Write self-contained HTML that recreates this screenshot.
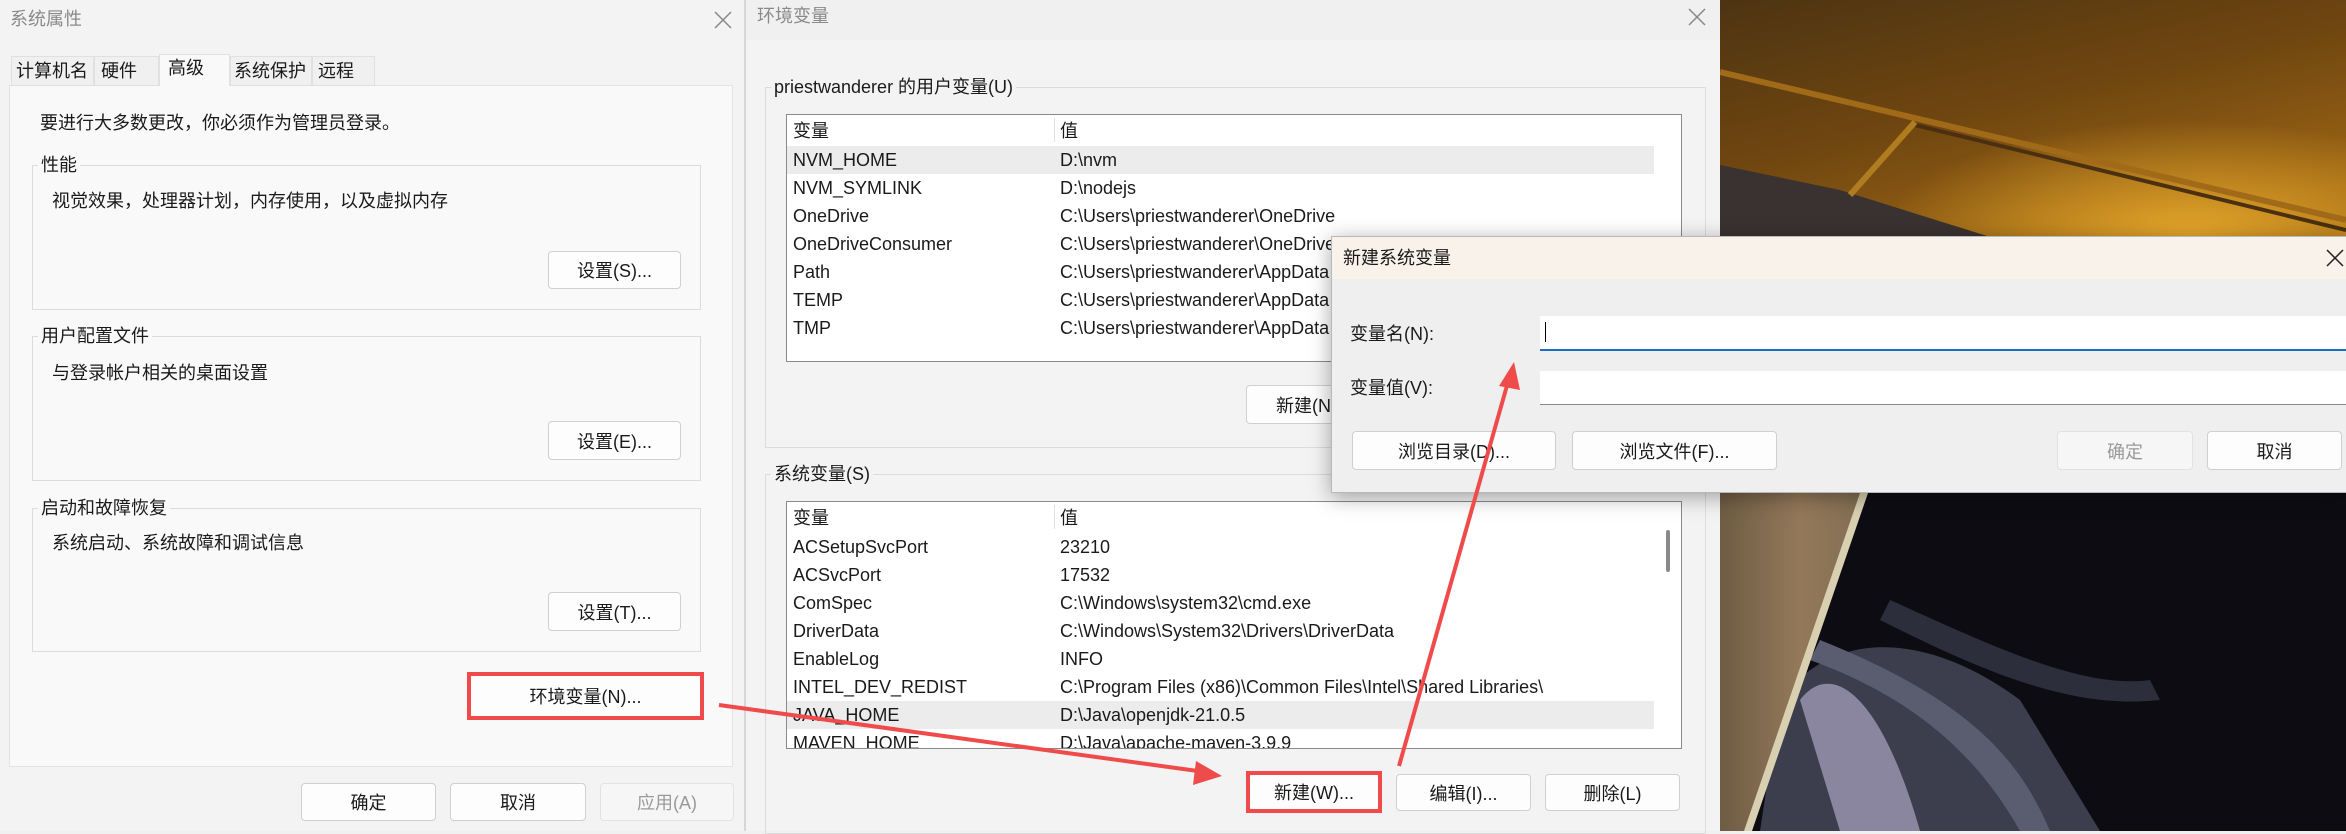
<!DOCTYPE html>
<html><head><meta charset="utf-8"><style>
*{box-sizing:border-box;margin:0;padding:0}
body{width:2346px;height:831px;overflow:hidden;position:relative;background:#f0f0f0;font-family:"Liberation Sans","Noto Sans CJK SC",sans-serif;font-size:18px;color:#1a1a1a}
.a{position:absolute}
.t{position:absolute;white-space:nowrap;line-height:1}
.btn{position:absolute;background:#fdfdfd;border:1px solid #d0d0d0;border-radius:4px;display:flex;align-items:center;justify-content:center;font-size:18px}
.dis{color:#9a9a9a;background:#f6f6f6;border-color:#e2e2e2}
.grp{position:absolute;border:1px solid #dcdcdc}
.lbl{position:absolute;background:#f9f9f9;padding:0 3px;line-height:1;white-space:nowrap}
.red{position:absolute;border:4px solid #ef4b4b}
</style></head><body>

<!-- left window -->
<div class="a" style="left:0;top:0;width:745px;height:831px;background:#f3f3f3"></div>
<div class="t" style="left:10px;top:10px;color:#8a8a8a">系统属性</div>
<svg class="a" style="left:714px;top:11px" width="18" height="18"><path d="M1 1L17 17M17 1L1 17" stroke="#888" stroke-width="1.5"/></svg>
<div class="a" style="left:9px;top:85px;width:724px;height:682px;background:#f9f9f9;border:1px solid #e3e3e3"></div>
<div class="a" style="left:11px;top:56px;width:83px;height:30px;background:#f0f0f0;border:1px solid #e0e0e0"></div>
<div class="a" style="left:94px;top:56px;width:65px;height:30px;background:#f0f0f0;border:1px solid #e0e0e0"></div>
<div class="a" style="left:159px;top:54px;width:71px;height:32px;background:#f9f9f9;border:1px solid #e0e0e0;border-bottom:none"></div>
<div class="a" style="left:230px;top:56px;width:82px;height:30px;background:#f0f0f0;border:1px solid #e0e0e0"></div>
<div class="a" style="left:312px;top:56px;width:63px;height:30px;background:#f0f0f0;border:1px solid #e0e0e0"></div>
<div class="t" style="left:16px;top:62px">计算机名</div>
<div class="t" style="left:101px;top:62px">硬件</div>
<div class="t" style="left:168px;top:59px">高级</div>
<div class="t" style="left:234px;top:62px">系统保护</div>
<div class="t" style="left:318px;top:62px">远程</div>
<div class="t" style="left:40px;top:114px">要进行大多数更改，你必须作为管理员登录。</div>

<div class="grp" style="left:32px;top:165px;width:669px;height:145px"></div>
<div class="lbl" style="left:38px;top:156px">性能</div>
<div class="t" style="left:52px;top:192px">视觉效果，处理器计划，内存使用，以及虚拟内存</div>
<div class="btn" style="left:548px;top:251px;width:133px;height:38px">设置(S)...</div>

<div class="grp" style="left:32px;top:336px;width:669px;height:145px"></div>
<div class="lbl" style="left:38px;top:327px">用户配置文件</div>
<div class="t" style="left:52px;top:364px">与登录帐户相关的桌面设置</div>
<div class="btn" style="left:548px;top:421px;width:133px;height:39px">设置(E)...</div>

<div class="grp" style="left:32px;top:508px;width:669px;height:144px"></div>
<div class="lbl" style="left:38px;top:499px">启动和故障恢复</div>
<div class="t" style="left:52px;top:534px">系统启动、系统故障和调试信息</div>
<div class="btn" style="left:548px;top:592px;width:133px;height:39px">设置(T)...</div>

<div class="btn" style="left:471px;top:676px;width:229px;height:40px;border:none;background:#fdfdfd">环境变量(N)...</div>
<div class="red" style="left:467px;top:672px;width:237px;height:48px"></div>

<div class="btn" style="left:301px;top:783px;width:135px;height:38px">确定</div>
<div class="btn" style="left:450px;top:783px;width:136px;height:38px">取消</div>
<div class="btn dis" style="left:600px;top:783px;width:134px;height:38px">应用(A)</div>

<!-- env window -->
<div class="a" style="left:744px;top:0;width:2px;height:831px;background:#d6d6d6"></div>
<div class="a" style="left:746px;top:0;width:974px;height:831px;background:#f0f0f0"></div>
<div class="a" style="left:746px;top:40px;width:974px;height:791px;background:#f3f3f3"></div>
<div class="t" style="left:757px;top:7px;color:#8a8a8a">环境变量</div>
<svg class="a" style="left:1688px;top:8px" width="18" height="18"><path d="M1 1L17 17M17 1L1 17" stroke="#888" stroke-width="1.5"/></svg>

<div class="grp" style="left:765px;top:87px;width:941px;height:361px"></div>
<div class="lbl" style="left:771px;top:78px;background:#f3f3f3">priestwanderer 的用户变量(U)</div>
<div class="a" style="left:786px;top:114px;width:896px;height:248px;background:#fff;border:1px solid #8a8a8a"></div>
<div class="a" style="left:787px;top:146px;width:867px;height:28px;background:#ececec"></div>
<div class="a" style="left:1054px;top:118px;width:1px;height:24px;background:#e0e0e0"></div>
<div class="t" style="left:793px;top:122px">变量</div><div class="t" style="left:1060px;top:122px">值</div>
<div class="t" style="left:793px;top:151px">NVM_HOME</div><div class="t" style="left:1060px;top:151px">D:\nvm</div>
<div class="t" style="left:793px;top:179px">NVM_SYMLINK</div><div class="t" style="left:1060px;top:179px">D:\nodejs</div>
<div class="t" style="left:793px;top:207px">OneDrive</div><div class="t" style="left:1060px;top:207px">C:\Users\priestwanderer\OneDrive</div>
<div class="t" style="left:793px;top:235px">OneDriveConsumer</div><div class="t" style="left:1060px;top:235px">C:\Users\priestwanderer\OneDrive</div>
<div class="t" style="left:793px;top:263px">Path</div><div class="t" style="left:1060px;top:263px">C:\Users\priestwanderer\AppData</div>
<div class="t" style="left:793px;top:291px">TEMP</div><div class="t" style="left:1060px;top:291px">C:\Users\priestwanderer\AppData</div>
<div class="t" style="left:793px;top:319px">TMP</div><div class="t" style="left:1060px;top:319px">C:\Users\priestwanderer\AppData</div>
<div class="btn" style="left:1246px;top:385px;width:136px;height:39px">新建(N)...</div>

<div class="grp" style="left:765px;top:474px;width:941px;height:360px"></div>
<div class="lbl" style="left:771px;top:465px;background:#f3f3f3">系统变量(S)</div>
<div class="a" style="left:786px;top:501px;width:896px;height:248px;background:#fff;border:1px solid #8a8a8a;overflow:hidden"></div>
<div class="a" style="left:787px;top:701px;width:867px;height:28px;background:#ececec"></div>
<div class="a" style="left:1666px;top:530px;width:4px;height:42px;background:#8a8a8a;border-radius:2px"></div>
<div class="a" style="left:1054px;top:505px;width:1px;height:24px;background:#e0e0e0"></div>
<div class="a" style="left:787px;top:502px;width:866px;height:246px;overflow:hidden">
<div class="t" style="left:6px;top:7px">变量</div><div class="t" style="left:273px;top:7px">值</div>
<div class="t" style="left:6px;top:36px">ACSetupSvcPort</div><div class="t" style="left:273px;top:36px">23210</div>
<div class="t" style="left:6px;top:64px">ACSvcPort</div><div class="t" style="left:273px;top:64px">17532</div>
<div class="t" style="left:6px;top:92px">ComSpec</div><div class="t" style="left:273px;top:92px">C:\Windows\system32\cmd.exe</div>
<div class="t" style="left:6px;top:120px">DriverData</div><div class="t" style="left:273px;top:120px">C:\Windows\System32\Drivers\DriverData</div>
<div class="t" style="left:6px;top:148px">EnableLog</div><div class="t" style="left:273px;top:148px">INFO</div>
<div class="t" style="left:6px;top:176px">INTEL_DEV_REDIST</div><div class="t" style="left:273px;top:176px">C:\Program Files (x86)\Common Files\Intel\Shared Libraries\</div>
<div class="t" style="left:6px;top:204px">JAVA_HOME</div><div class="t" style="left:273px;top:204px">D:\Java\openjdk-21.0.5</div>
<div class="t" style="left:6px;top:232px">MAVEN_HOME</div><div class="t" style="left:273px;top:232px">D:\Java\apache-maven-3.9.9</div>
</div>
<div class="btn" style="left:1250px;top:775px;width:128px;height:34px;border:none">新建(W)...</div>
<div class="red" style="left:1246px;top:771px;width:136px;height:42px"></div>
<div class="btn" style="left:1396px;top:774px;width:135px;height:37px">编辑(I)...</div>
<div class="btn" style="left:1545px;top:774px;width:135px;height:37px">删除(L)</div>

<!-- background photo -->
<svg class="a" style="left:1720px;top:0" width="626" height="831" viewBox="0 0 626 831">
<defs>
<linearGradient id="g1" x1="0" y1="0" x2="0.6" y2="1"><stop offset="0" stop-color="#4d3412"/><stop offset="0.5" stop-color="#6e4510"/><stop offset="1" stop-color="#9c6514"/></linearGradient>
<radialGradient id="g2" cx="0.75" cy="1" r="0.5"><stop offset="0" stop-color="#e6a82a"/><stop offset="1" stop-color="#e6a82a" stop-opacity="0"/></radialGradient>
<linearGradient id="g3" x1="0" y1="0" x2="1" y2="0"><stop offset="0" stop-color="#6e5c44"/><stop offset="0.5" stop-color="#94795a"/><stop offset="1" stop-color="#7d6a50"/></linearGradient>
<clipPath id="cp"><path d="M146 493 L626 493 L626 831 L30 831 Z"/></clipPath>
</defs>
<rect width="626" height="240" fill="url(#g1)"/>
<rect width="626" height="240" fill="url(#g2)"/>
<path d="M0 72 L626 220" stroke="#a06a18" stroke-width="6"/>
<path d="M195 125 L626 230" stroke="#4a3010" stroke-width="4"/>
<path d="M0 165 L0 240 L280 240 L120 190 Z" fill="#3a3230"/>
<path d="M130 195 L195 122" stroke="#b07c20" stroke-width="6"/>
<rect y="240" width="160" height="591" fill="url(#g3)"/>
<g clip-path="url(#cp)">
<rect y="240" width="626" height="591" fill="#0c0c12"/>
<path d="M60 700 C120 620 220 640 300 700 L380 831 L40 831 Z" fill="#3c3e4e"/>
<path d="M80 700 C110 660 160 690 200 831 L120 831 Z" fill="#8a86a0"/>
<path d="M100 640 C250 700 300 760 330 831 L300 831 C260 760 200 700 90 660Z" fill="#5a5c70"/>
<path d="M170 600 C260 640 360 690 430 680 L440 700 C350 710 260 670 160 620Z" fill="#2c2e3c"/>
</g>
<path d="M140 493 L148 493 L32 831 L24 831 Z" fill="#d8d0b0"/>
</svg>

<!-- new sys var dialog -->
<div class="a" style="left:1331px;top:236px;width:1015px;height:257px;background:#efefef;border:1px solid #b8b8b8;border-right:none;box-shadow:0 4px 20px rgba(0,0,0,.35)"></div>
<div class="a" style="left:1332px;top:237px;width:1014px;height:42px;background:#f8f2ea"></div>
<div class="t" style="left:1343px;top:249px">新建系统变量</div>
<svg class="a" style="left:2326px;top:249px" width="18" height="18"><path d="M1 1L17 17M17 1L1 17" stroke="#222" stroke-width="1.5"/></svg>
<div class="t" style="left:1350px;top:325px">变量名(N):</div>
<div class="a" style="left:1540px;top:316px;width:806px;height:35px;background:#fff;border-bottom:2px solid #1a6fc4"></div>
<div class="a" style="left:1545px;top:322px;width:1px;height:20px;background:#000"></div>
<div class="t" style="left:1350px;top:379px">变量值(V):</div>
<div class="a" style="left:1540px;top:371px;width:806px;height:34px;background:#fff;border-bottom:1px solid #888"></div>
<div class="btn" style="left:1352px;top:431px;width:204px;height:39px">浏览目录(D)...</div>
<div class="btn" style="left:1572px;top:431px;width:205px;height:39px">浏览文件(F)...</div>
<div class="btn dis" style="left:2057px;top:431px;width:136px;height:39px">确定</div>
<div class="btn" style="left:2207px;top:431px;width:135px;height:39px">取消</div>

<!-- arrows -->
<svg class="a" style="left:0;top:0" width="2346" height="831">
<line x1="719" y1="705" x2="1205" y2="772" stroke="#ef4b4b" stroke-width="4"/>
<polygon points="1222,776 1196,761 1193,785" fill="#ef4b4b"/>
<line x1="1399" y1="766" x2="1508" y2="382" stroke="#ef4b4b" stroke-width="4"/>
<polygon points="1514,362 1499,386 1520,390" fill="#ef4b4b"/>
</svg>
</body></html>
